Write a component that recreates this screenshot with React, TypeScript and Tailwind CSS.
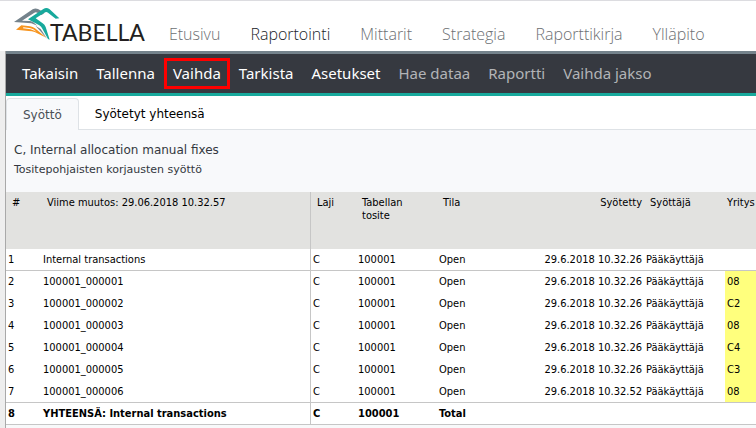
import React from "react";
import clsx from "clsx";

const mainLinks = ["Etusivu", "Raportointi", "Mittarit", "Strategia", "Raporttikirja", "Ylläpito"];

const actions = [
  { label: "Takaisin" },
  { label: "Tallenna" },
  { label: "Vaihda", highlighted: true },
  { label: "Tarkista" },
  { label: "Asetukset" },
  { label: "Hae dataa", disabled: true },
  { label: "Raportti", disabled: true },
  { label: "Vaihda jakso", disabled: true },
];

const rows = [
  { id: 1, name: "Internal transactions", time: "29.6.2018 10.32.26", company: "" },
  { id: 2, name: "100001_000001", time: "29.6.2018 10.32.26", company: "08" },
  { id: 3, name: "100001_000002", time: "29.6.2018 10.32.26", company: "C2" },
  { id: 4, name: "100001_000003", time: "29.6.2018 10.32.26", company: "08" },
  { id: 5, name: "100001_000004", time: "29.6.2018 10.32.26", company: "C4" },
  { id: 6, name: "100001_000005", time: "29.6.2018 10.32.26", company: "C3" },
  { id: 7, name: "100001_000006", time: "29.6.2018 10.32.52", company: "08" },
];

const Logo = () => (
  <a href="#" className="flex items-start" aria-label="Tabella">
    <svg className="h-[38px] w-[50px] shrink-0" viewBox="0 8 150 114">
      <path
        d="M6 59 L62 21 Q70 16 78 20 L98 31 L89 38 L76 31 Q71 28 66 32 L30 55 L54 56 Q60 57 64 60 L76 70 L58 63 Z"
        fill="#75838c"
      />
      <path
        d="M48 51 L94 20 Q103 14 112 20 L142 48 L131 49 L108 31 Q103 27 97 31 L71 48 L92 63 Q98 67 101 74 L113 112 L108 110 L91 79 Q88 73 82 69 Z"
        fill="#17a99c"
      />
      <path d="M70 70 L86 80 L106 110 L88 90 Z" fill="#75838c" />
      <path
        d="M28 69 L54 72 Q62 73 69 78 L103 106 L68 89 Q60 86 50 86 L12 82 Z"
        fill="#f7941e"
      />
      <path d="M34 75 L52 77 Q58 78 64 81 L74 88 L60 82 Q56 81 50 80 L33 78 Z" fill="#fff" />
    </svg>
    <span className="-ml-3 pt-[13px] font-[Lato,sans-serif] text-[23px] leading-7 text-[#231f20]">TABELLA</span>
  </a>
);

const Header = () => (
  <header className="flex h-[51px] items-start border-t border-[#dcdce0] bg-white pl-3 pt-1">
    <Logo />
    <nav className="ml-6 flex gap-[30px] whitespace-nowrap pt-[17px] font-['Open_Sans',sans-serif] text-base font-light leading-6">
      {mainLinks.map((label) => (
        <a
          key={label}
          href="#"
          className={label === "Raportointi" ? "text-[#202329]" : "text-[#6c6f73]"}
        >
          {label}
        </a>
      ))}
    </nav>
  </header>
);

const Toolbar = () => (
  <div className="flex h-[45px] items-center overflow-hidden whitespace-nowrap border-b-[3px] border-t-[3px] border-b-[#17a99c] border-t-[#75838c] bg-[#363940] pl-[7px] font-['Noto_Sans',sans-serif] text-[15px]">
    {actions.map((action) => (
      <button
        key={action.label}
        disabled={action.disabled}
        className={clsx(
          "h-[31px] border-[3px] px-[6px]",
          action.highlighted ? "border-[#ff0000]" : "border-transparent",
          action.disabled ? "text-[#b2b4b7]" : "text-white"
        )}
      >
        {action.label}
      </button>
    ))}
  </div>
);

const Tabs = () => (
  <div role="tablist" className="flex h-[34px] border-b border-[#dee2e6] bg-white pt-[2px] text-[12px]">
    <button
      role="tab"
      aria-selected="true"
      className="-mb-px rounded-t border border-b-0 border-[#dee2e6] bg-[#f8f9fb] px-4 text-[#495057]"
    >
      Syöttö
    </button>
    <button role="tab" aria-selected="false" className="px-4 text-black">
      Syötetyt yhteensä
    </button>
  </div>
);

const head = "px-[6px] pt-1 font-normal";
const cell = "px-[2px] pt-1";

const EntryTable = () => (
  <table className="w-full table-fixed border-separate border-spacing-0 whitespace-nowrap bg-white text-left font-['DejaVu_Sans_Condensed','Noto_Sans',sans-serif] text-[11px] leading-[13px] text-black">
    <colgroup>
      <col className="w-[35px]" />
      <col className="w-[270px]" />
      <col className="w-[45px]" />
      <col className="w-[81px]" />
      <col className="w-[81px]" />
      <col className="w-[126px]" />
      <col className="w-[81px]" />
      <col />
    </colgroup>
    <thead>
      <tr className="h-[57px] bg-[#e2e2e0] align-top">
        <th className={head}>#</th>
        <th className={clsx(head, "border-r border-[#c6c6c6]")}>Viime muutos: 29.06.2018 10.32.57</th>
        <th className={head}>Laji</th>
        <th className={head}>
          Tabellan
          <br />
          tosite
        </th>
        <th className={head}>Tila</th>
        <th className="px-[2px] pt-1 text-right font-normal">Syötetty</th>
        <th className={head}>Syöttäjä</th>
        <th className="px-[2px] pt-1 font-normal">Yritys</th>
      </tr>
    </thead>
    <tbody>
      {rows.map((row) => {
        const line = (row.id === 1 || row.id === 7) && "border-b border-[#c6c6c6]";
        return (
          <tr key={row.id} className="h-[22px] align-top">
            <td className={clsx(cell, line)}>{row.id}</td>
            <td className={clsx(cell, line, "border-r border-[#c6c6c6]")}>{row.name}</td>
            <td className={clsx(cell, line)}>C</td>
            <td className={clsx(cell, line)}>100001</td>
            <td className={clsx(cell, line)}>Open</td>
            <td className={clsx(cell, line, "text-right")}>{row.time}</td>
            <td className={clsx(cell, line)}>Pääkäyttäjä</td>
            <td className={clsx(cell, line, row.company && "bg-[#ffff7d]")}>{row.company}</td>
          </tr>
        );
      })}
    </tbody>
    <tfoot>
      <tr className="h-[22px] align-top font-bold">
        <td className={clsx(cell, "border-b border-[#c6c6c6]")}>8</td>
        <td className={clsx(cell, "border-b border-r border-[#c6c6c6]")}>YHTEENSÄ: Internal transactions</td>
        <td className={clsx(cell, "border-b border-[#c6c6c6]")}>C</td>
        <td className={clsx(cell, "border-b border-[#c6c6c6]")}>100001</td>
        <td className={clsx(cell, "border-b border-[#c6c6c6]")}>Total</td>
        <td className="border-b border-[#c6c6c6]" colSpan={3}></td>
      </tr>
    </tfoot>
  </table>
);

export default function App() {
  return (
    <div className="flex min-h-screen flex-col overflow-hidden bg-[#eeeeee] font-['DejaVu_Sans',sans-serif]">
      <Header />
      <main className="ml-[5px] flex-1 border-l border-[#a9a9a9] bg-[#f8f9fa]">
        <Toolbar />
        <Tabs />
        <section className="h-[62px] bg-[#f8f9fb] px-2 pt-[10px] text-[#333840]">
          <h1 className="text-[12px] leading-5">C, Internal allocation manual fixes</h1>
          <p className="text-[11px] leading-5">Tositepohjaisten korjausten syöttö</p>
        </section>
        <EntryTable />
      </main>
    </div>
  );
}
